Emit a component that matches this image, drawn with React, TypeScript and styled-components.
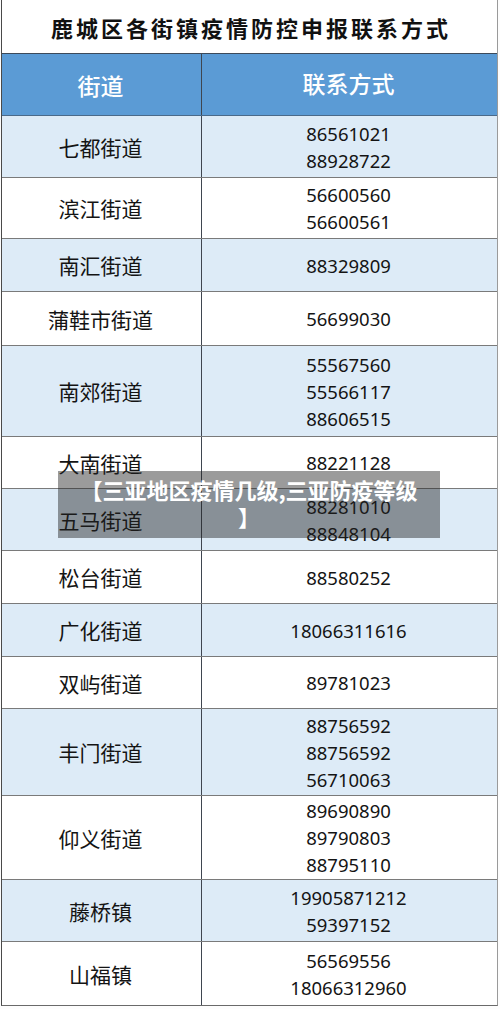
import React from 'react';
import styled, { createGlobalStyle } from 'styled-components';

const Global = createGlobalStyle`
  html, body { margin: 0; padding: 0; background: #ffffff; }
  body { font-family: "Noto Sans CJK SC", "Noto Sans", sans-serif; }
  * { box-sizing: border-box; }
`;

const Page = styled.div`
  position: relative;
  width: 500px;
  height: 1009px;
  overflow: hidden;
  background: #fdfdfd;
`;

const Sheet = styled.div`
  margin-left: 1px;
  width: 497px;
  border-left: 1px solid #4a4a4a;
  border-right: 1px solid #9a9a9a;
  border-bottom: 1px solid #6a6a6a;
`;

const Title = styled.div`
  height: 53px;
  display: flex;
  align-items: center;
  justify-content: center;
  background: #ffffff;
  font-family: "Noto Sans CJK SC", sans-serif;
  font-size: 22px;
  font-weight: 600;
  letter-spacing: 3px;
  padding-left: 3px;
  color: #111111;
`;

const Row = styled.div<{ $h: number; $bg: string; $line: string }>`
  display: grid;
  grid-template-columns: 200px 1fr;
  height: ${(p) => p.$h}px;
  background: ${(p) => p.$bg};
  border-top: 1px solid ${(p) => p.$line};
`;

const NameCell = styled.div<{ $header?: boolean }>`
  display: flex;
  align-items: center;
  justify-content: center;
  border-right: 1px solid #3f4650;
  font-family: "Noto Sans CJK SC", sans-serif;
  font-size: ${(p) => (p.$header ? '23px' : '21px')};
  font-weight: ${(p) => (p.$header ? 500 : 400)};
  color: ${(p) => (p.$header ? '#ffffff' : '#141414')};
  padding-right: 2px;
`;

const NumCell = styled.div<{ $header?: boolean }>`
  display: flex;
  flex-direction: column;
  align-items: center;
  justify-content: center;
  font-family: "Noto Sans", "Noto Sans CJK SC", sans-serif;
  font-size: ${(p) => (p.$header ? '23px' : '18.5px')};
  font-weight: ${(p) => (p.$header ? 500 : 400)};
  line-height: 27px;
  color: ${(p) => (p.$header ? '#ffffff' : '#141414')};
  padding-right: 2px;
`;

const Banner = styled.div`
  position: absolute;
  left: 58px;
  top: 471px;
  width: 382px;
  height: 67px;
  background: rgba(33, 33, 33, 0.45);
  color: #ffffff;
  font-family: "Noto Sans CJK SC", sans-serif;
  font-weight: 700;
  font-size: 22px;
  line-height: 27px;
  text-align: center;
  padding-top: 5px;
`;

type RowData = { name: string; nums: string[]; h: number };

const rows: RowData[] = [
  { name: '七都街道', nums: ['86561021', '88928722'], h: 62 },
  { name: '滨江街道', nums: ['56600560', '56600561'], h: 61 },
  { name: '南汇街道', nums: ['88329809'], h: 53 },
  { name: '蒲鞋市街道', nums: ['56699030'], h: 54 },
  { name: '南郊街道', nums: ['55567560', '55566117', '88606515'], h: 91 },
  { name: '大南街道', nums: ['88221128'], h: 52 },
  { name: '五马街道', nums: ['88281010', '88848104'], h: 62 },
  { name: '松台街道', nums: ['88580252'], h: 53 },
  { name: '广化街道', nums: ['18066311616'], h: 53 },
  { name: '双屿街道', nums: ['89781023'], h: 52 },
  { name: '丰门街道', nums: ['88756592', '88756592', '56710063'], h: 87 },
  { name: '仰义街道', nums: ['89690890', '89790803', '88795110'], h: 84 },
  { name: '藤桥镇', nums: ['19905871212', '59397152'], h: 62 },
  { name: '山福镇', nums: ['56569556', '18066312960'], h: 64 },
];

export default function App() {
  return (
    <Page>
      <Global />
      <Sheet>
        <Title>鹿城区各街镇疫情防控申报联系方式</Title>
        <Row $h={62} $bg="#5b9bd5" $line="#3c4a5a">
          <NameCell $header>街道</NameCell>
          <NumCell $header>联系方式</NumCell>
        </Row>
        {rows.map((r, i) => (
          <Row
            key={r.name}
            $h={r.h}
            $bg={i % 2 === 0 ? '#ddebf7' : '#ffffff'}
            $line={i === 0 ? '#4a6a8a' : '#7a7a7a'}
          >
            <NameCell>{r.name}</NameCell>
            <NumCell>
              {r.nums.map((n, j) => (
                <span key={j}>{n}</span>
              ))}
            </NumCell>
          </Row>
        ))}
      </Sheet>
      <Banner>
        【三亚地区疫情几级,三亚防疫等级
        <br />】
      </Banner>
    </Page>
  );
}
